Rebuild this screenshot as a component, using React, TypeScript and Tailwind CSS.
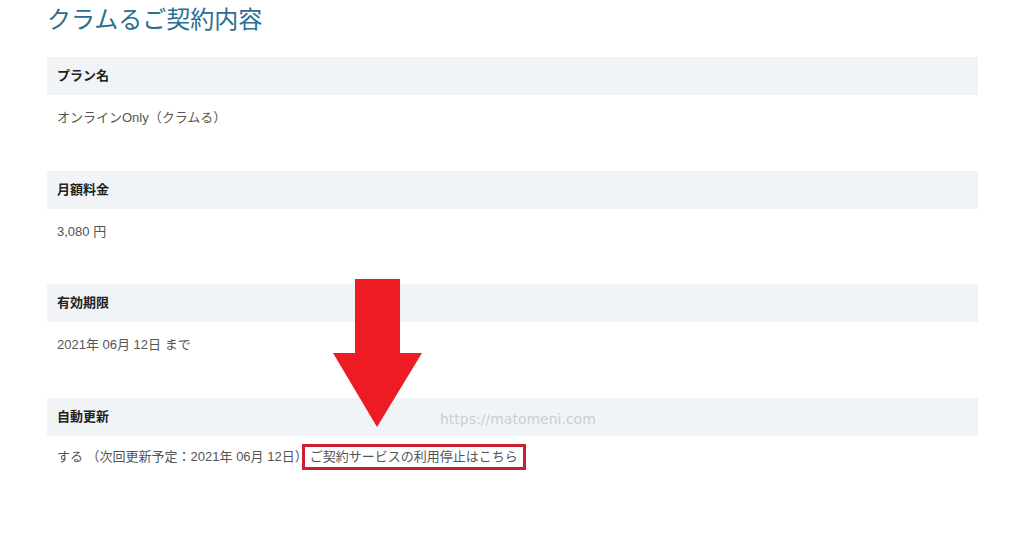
const rows = [
  { label: "プラン名", value: "オンラインOnly（クラムる）" },
  { label: "月額料金", value: "3,080 円" },
  { label: "有効期限", value: "2021年 06月 12日 まで" },
];

function Row({ label, children }: { label: string; children: React.ReactNode }) {
  return (
    <div>
      <div className="h-[38px] bg-[#f1f4f7] pl-[10px] flex items-center text-[13px] font-bold text-[#222]">{label}</div>
      <div className="h-[75.5px] pl-[10px] pt-[14px] text-[13px] leading-[18px] text-[#555]">{children}</div>
    </div>
  );
}

export default function App() {
  return (
    <div
      className="relative w-[1024px] h-[533px] bg-white overflow-hidden"
      style={{ fontFamily: '"Liberation Sans", "Noto Sans CJK JP", sans-serif' }}
    >
      <div className="pl-[47px] pr-[46px]">
        <h1
          className="h-[57px] pt-[2px] text-[24px] leading-[32px] text-[#2b6e90] font-normal"
          style={{ fontFamily: '"Noto Sans CJK JP", sans-serif' }}
        >
          クラムるご契約内容
        </h1>
        {rows.map((r) => (
          <Row key={r.label} label={r.label}>
            {r.value}
          </Row>
        ))}
        <Row label="自動更新">
          <div className="flex items-center -mt-[6px]">
            <span>する （次回更新予定：2021年 06月 12日）</span>
            <span className="-ml-[6px] border-[3px] border-[#c8202f] px-[5px] leading-[20px]">ご契約サービスの利用停止はこちら</span>
          </div>
        </Row>
      </div>

      <div
        className="absolute left-[440px] top-[409px] text-[14px] text-[#c9ced3]"
        style={{ fontFamily: '"DejaVu Sans", sans-serif' }}
      >
        https://matomeni.com
      </div>

      <svg className="absolute left-0 top-0" width="1024" height="533" viewBox="0 0 1024 533">
        <polygon points="355,279 400,279 400,353 422,353 377,427 333,353 355,353" fill="#ed1c24" />
      </svg>
    </div>
  );
}
